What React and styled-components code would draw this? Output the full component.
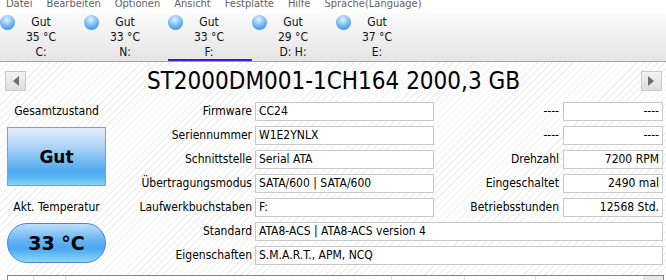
import React from 'react'
import styled, { createGlobalStyle } from 'styled-components'

const GlobalStyle = createGlobalStyle`
    html, body { margin: 0; padding: 0; }
    body {
        font-family: "DejaVu Sans Condensed", "DejaVu Sans", sans-serif;
        font-stretch: condensed;
        font-size: 12px;
        color: #000;
        background: #fff;
    }
`

const menu = ['Datei', 'Bearbeiten', 'Optionen', 'Ansicht', 'Festplatte', 'Hilfe', 'Sprache(Language)']

const drives = [
    { temp: '35 °C', letter: 'C:' },
    { temp: '33 °C', letter: 'N:' },
    { temp: '33 °C', letter: 'F:', active: true },
    { temp: '29 °C', letter: 'D: H:' },
    { temp: '37 °C', letter: 'E:' },
]

const leftRows = [
    ['Firmware', 'CC24'],
    ['Seriennummer', 'W1E2YNLX'],
    ['Schnittstelle', 'Serial ATA'],
    ['Übertragungsmodus', 'SATA/600 | SATA/600'],
    ['Laufwerkbuchstaben', 'F:'],
]

const rightRows = [
    ['----', '----'],
    ['----', '----'],
    ['Drehzahl', '7200 RPM'],
    ['Eingeschaltet', '2490 mal'],
    ['Betriebsstunden', '12568 Std.'],
]

const wideRows = [
    ['Standard', 'ATA8-ACS | ATA8-ACS version 4'],
    ['Eigenschaften', 'S.M.A.R.T., APM, NCQ'],
]

const columns = [26, 32, 326, 73, 71, 108]

function Arrow({ dir }) {
    return (
        <ArrowButton>
            <svg width="7" height="10" viewBox="0 0 7 10">
                {dir === 'left'
                    ? <polygon points="7,0 7,10 1,5" fill="#6e6e6e" />
                    : <polygon points="0,0 0,10 6,5" fill="#6e6e6e" />}
            </svg>
        </ArrowButton>
    )
}

export default function App() {
    return (
        <Window>
            <GlobalStyle />
            <MenuBar>
                {menu.map(m => <MenuItem key={m}>{m}</MenuItem>)}
            </MenuBar>
            <DriveBar>
                {drives.map((d, i) => (
                    <DriveItem key={i} $active={d.active}>
                        <DriveDot />
                        <DriveText>
                            <div>Gut</div>
                            <div>{d.temp}</div>
                            <div>{d.letter}</div>
                        </DriveText>
                    </DriveItem>
                ))}
            </DriveBar>
            <TitleRow>
                <Arrow dir="left" />
                <Title>ST2000DM001-1CH164 2000,3 GB</Title>
                <Arrow dir="right" />
            </TitleRow>
            <Body>
                <LeftPanel>
                    <PanelLabel>Gesamtzustand</PanelLabel>
                    <HealthBox>Gut</HealthBox>
                    <PanelLabel $gap>Akt. Temperatur</PanelLabel>
                    <TempPill>33 °C</TempPill>
                </LeftPanel>
                <Fields>
                    {leftRows.map(([label, value], i) => (
                        <React.Fragment key={label}>
                            <Label>{label}</Label>
                            <Value>{value}</Value>
                            <Label $right>{rightRows[i][0]}</Label>
                            <Value $align="right">{rightRows[i][1]}</Value>
                        </React.Fragment>
                    ))}
                    {wideRows.map(([label, value]) => (
                        <React.Fragment key={label}>
                            <Label>{label}</Label>
                            <Value $wide>{value}</Value>
                        </React.Fragment>
                    ))}
                </Fields>
            </Body>
            <Table>
                {columns.map((w, i) => <HeadCell key={i} style={{ width: w }} />)}
                <HeadCorner />
            </Table>
        </Window>
    )
}

const Window = styled.div`
    width: 666px;
    height: 280px;
    overflow: hidden;
    background: repeating-linear-gradient(135deg, #ffffff 0px, #ffffff 4px, #f0f0f0 4px, #f0f0f0 5px);
`
const MenuBar = styled.div`
    display: flex;
    gap: 14px;
    height: 13px;
    padding-left: 6px;
    overflow: hidden;
    background: #fff;
`
const MenuItem = styled.span`
    font-size: 11px;
    line-height: 11px;
    margin-top: -2px;
    color: #5f5f5f;
`
const DriveBar = styled.div`
    display: flex;
    height: 48px;
    background: linear-gradient(#fbfbfb, #e5e5e5);
    border-bottom: 1px solid #a6a6a6;
`
const DriveItem = styled.div`
    display: grid;
    grid-template-columns: 15px 1fr 17px;
    width: 84px;
    box-shadow: ${({ $active }) => $active ? 'inset 0 -2px 0 #3d16f2' : 'none'};
`
const DriveDot = styled.div`
    width: 15px;
    height: 15px;
    margin-top: 2px;
    border-radius: 50%;
    background: radial-gradient(circle at 45% 30%, #e4f2ff 0%, #9fd0fa 30%, #4a9ff0 70%, #3a86dc 100%);
`
const DriveText = styled.div`
    padding-top: 2px;
    line-height: 15px;
    text-align: center;
    color: #111;
`
const TitleRow = styled.div`
    display: flex;
    align-items: center;
    justify-content: space-between;
    height: 38px;
    padding: 0 4px 0 5px;
`
const ArrowButton = styled.div`
    display: flex;
    align-items: center;
    justify-content: center;
    width: 19px;
    height: 18px;
    border: 1px solid #c9c9c9;
    background: linear-gradient(#f3f3f3, #dedede);
`
const Title = styled.div`
    font-size: 24px;
    line-height: 28px;
`
const Body = styled.div`
    display: grid;
    grid-template-columns: 113px 1fr;
    padding-top: 2px;
`
const LeftPanel = styled.div`
    display: flex;
    flex-direction: column;
    align-items: center;
    width: 99px;
    padding-left: 7px;
`
const PanelLabel = styled.div`
    height: 19px;
    line-height: 19px;
    margin-top: ${({ $gap }) => $gap ? '12px' : '0'};
`
const HealthBox = styled.div`
    box-sizing: border-box;
    display: flex;
    align-items: center;
    justify-content: center;
    width: 99px;
    height: 59px;
    margin-top: 6px;
    border: 1px solid #8e92dc;
    background: linear-gradient(#e6eefb 0%, #a9d2f7 35%, #4eaaf0 75%, #5bb8f3 88%, #86d2f8 100%);
    font-family: "DejaVu Sans", sans-serif;
    font-stretch: normal;
    font-weight: bold;
    font-size: 17px;
`
const TempPill = styled.div`
    box-sizing: border-box;
    display: flex;
    align-items: center;
    justify-content: center;
    width: 99px;
    height: 40px;
    margin-top: 6px;
    border: 1px solid #4f7fe0;
    border-radius: 20px;
    background: linear-gradient(#bfe0fb 0%, #6ab6f4 40%, #4aa7f0 65%, #8bdafa 100%);
    font-family: "DejaVu Sans", sans-serif;
    font-stretch: normal;
    font-weight: bold;
    font-size: 19px;
`
const Fields = styled.div`
    display: grid;
    grid-template-columns: 142px 179px 129px 100px;
    grid-auto-rows: 19px;
    row-gap: 5px;
`
const Label = styled.div`
    line-height: 19px;
    text-align: right;
    white-space: nowrap;
    padding-right: ${({ $right }) => $right ? '4px' : '3px'};
`
const Value = styled.div`
    box-sizing: border-box;
    grid-column: ${({ $wide }) => $wide ? '2 / 5' : 'auto'};
    height: 19px;
    line-height: 17px;
    padding: 0 3px;
    border: 1px solid #c8c8c8;
    background: #fff;
    text-align: ${({ $align }) => $align || 'left'};
    white-space: nowrap;
`
const Table = styled.div`
    display: flex;
    width: 655px;
    height: 20px;
    margin: 10px 0 0 7px;
    border: 1px solid #82868f;
    border-bottom: none;
    background: #fff;
`
const HeadCell = styled.div`
    box-sizing: border-box;
    border-right: 1px solid #dedede;
`
const HeadCorner = styled.div`
    flex: 1;
    background: #e8e8e8;
`
